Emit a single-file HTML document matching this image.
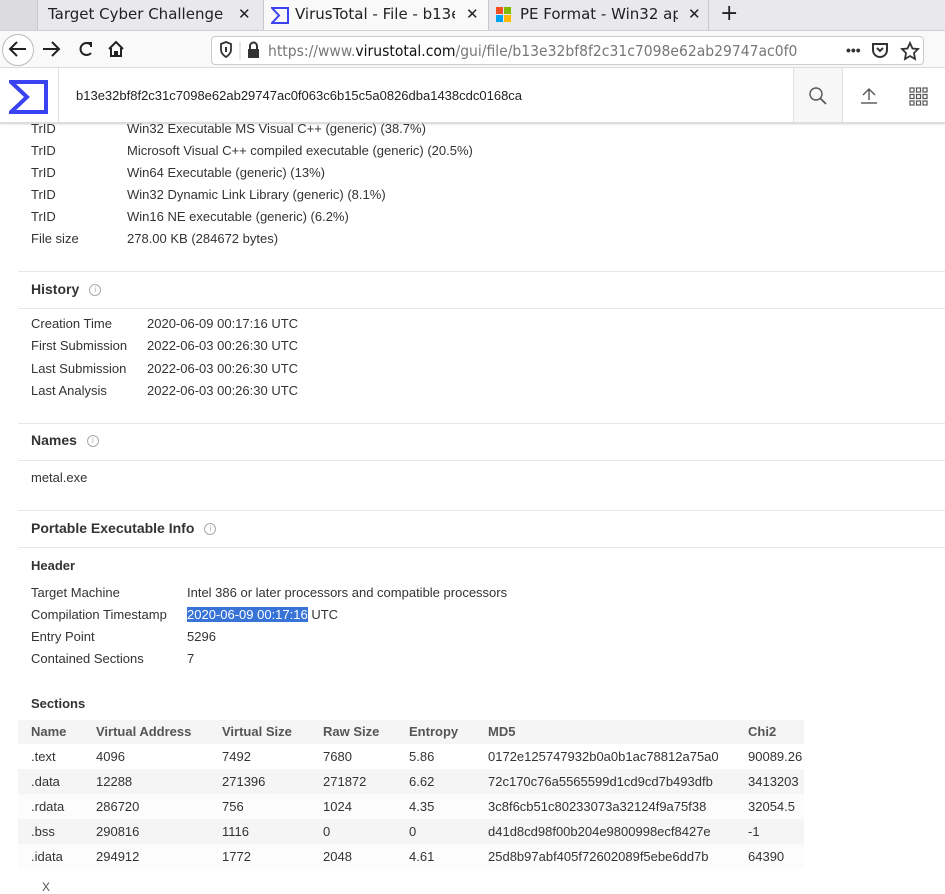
<!DOCTYPE html>
<html><head><meta charset="utf-8"><style>
*{margin:0;padding:0;box-sizing:border-box}
body{width:945px;height:889px;overflow:hidden;background:#fff;font-family:"Liberation Sans",sans-serif;color:#333;font-size:13px;position:relative}
.a{position:absolute;white-space:nowrap}
.tb{font-family:"DejaVu Sans",sans-serif;font-size:15px;color:#222}
.hr{position:absolute;left:18px;right:0;height:1px;background:#e6e6e6}
.h{font-weight:bold;font-size:14px;color:#333}
.ic{display:inline-block;width:12px;height:12px;border:1px solid #aaa;border-radius:50%;font-size:8px;color:#aaa;text-align:center;line-height:10px;font-weight:normal;vertical-align:middle;margin-left:10px}
.th{font-weight:bold;color:#555}
</style></head><body>
<!-- tab bar -->
<div class="a" style="left:0;top:0;width:945px;height:30px;background:#e9e8ec"></div>
<div class="a" style="left:0;top:0;width:37px;height:30px;background:#dcdbe0"></div>
<div class="a" style="left:37px;top:0;width:226px;height:30px;border-left:1px solid #c8c8c8"></div>
<div class="a tb" style="left:48px;top:5px">Target Cyber Challenge</div>
<div class="a tb" style="left:238px;top:5px">✕</div>
<div class="a" style="left:263px;top:0;width:226px;height:31px;background:#f9f9fa;border-left:1px solid #c8c8c8;border-right:1px solid #c8c8c8"></div>
<svg class="a" style="left:271px;top:7px" width="18" height="17"><path d="M1 1H17V16H1L8 8.5Z" fill="none" stroke="#3a43f2" stroke-width="2"/></svg>
<div class="a tb" style="left:295px;top:5px;width:160px;overflow:hidden">VirusTotal - File - b13e32</div>
<div class="a tb" style="left:466px;top:5px">✕</div>
<svg class="a" style="left:496px;top:7px" width="16" height="16"><rect x="0" y="0" width="7" height="7" fill="#f25022"/><rect x="8" y="0" width="7" height="7" fill="#7fba00"/><rect x="0" y="8" width="7" height="7" fill="#00a4ef"/><rect x="8" y="8" width="7" height="7" fill="#ffb900"/></svg>
<div class="a tb" style="left:520px;top:5px;width:158px;overflow:hidden">PE Format - Win32 apps</div>
<div class="a tb" style="left:688px;top:5px">✕</div>
<div class="a" style="left:708px;top:0;height:30px;border-left:1px solid #c8c8c8"></div>
<div class="a tb" style="left:720px;top:1px;font-size:22px">+</div>
<!-- nav bar -->
<div class="a" style="left:0;top:30px;width:945px;height:37px;background:#f9f9fa;border-top:1px solid #d0d0d0"></div>
<div class="a" style="left:2px;top:34px;width:32px;height:32px;border:1px solid #bbb;border-radius:50%;background:#fff"></div>
<svg class="a" style="left:0;top:30px" width="140" height="37"><g fill="none" stroke="#222" stroke-width="2"><path d="M10 19H26M17 12L10 19L17 26"/><path d="M43 19H59M52 12L59 19L52 26"/><path d="M91 15A6 6 0 1 0 91 23M87 13H91V17"/><path d="M109 19L116 12L123 19M111 18V26H121V18"/></g><rect x="114" y="21" width="4" height="5" fill="#222"/></svg>
<div class="a" style="left:211px;top:36px;width:713px;height:29px;background:#fff;border:1px solid #ccc;border-radius:4px"></div>
<svg class="a" style="left:218px;top:41px" width="48" height="20"><path d="M3 3L8 1L13 3V9C13 13 8 16 8 16C8 16 3 13 3 9Z" fill="none" stroke="#333" stroke-width="1.8"/><rect x="7" y="6" width="2" height="5" fill="#333"/><line x1="22" y1="1" x2="22" y2="19" stroke="#ccc"/><rect x="30" y="8" width="11" height="9" fill="#333"/><path d="M32 8V5A3.5 3.5 0 0 1 39 5V8" fill="none" stroke="#333" stroke-width="2"/></svg>
<div class="a" style="left:268px;top:42px;font-family:'DejaVu Sans',sans-serif;font-size:15px;color:#777;width:570px;overflow:hidden;transform:scaleX(.93);transform-origin:left"><span>https://www.</span><span style="color:#111">virustotal.com</span>/gui/file/b13e32bf8f2c31c7098e62ab29747ac0f063c6b15c5a0826</div>
<div class="a" style="left:846px;top:42px;font-size:14px;font-weight:bold;color:#333">•••</div>
<svg class="a" style="left:870px;top:41px" width="50" height="20"><path d="M3 3H17V9A7 7 0 0 1 3 9Z" fill="none" stroke="#333" stroke-width="2"/><path d="M7 7L10 10L13 7" fill="none" stroke="#333" stroke-width="2"/><path d="M40 2L42.5 7.5L48 8L44 12L45 18L40 15L35 18L36 12L32 8L37.5 7.5Z" fill="none" stroke="#333" stroke-width="1.8"/></svg>
<!-- VT header -->
<div class="a" style="left:0;top:67px;width:945px;height:56px;background:#fff;border-top:1px solid #ddd;border-bottom:1px solid #ddd;box-shadow:0 1px 2px rgba(0,0,0,.1)"></div>
<svg class="a" style="left:9px;top:80px" width="40" height="34"><path d="M2 2H37V32H2L18 17Z" fill="none" stroke="#3a43f2" stroke-width="4"/></svg>
<div class="a" style="left:58px;top:68px;height:54px;border-left:1px solid #e0e0e0"></div>
<div class="a" style="left:76px;top:88px;font-size:13px;color:#222">b13e32bf8f2c31c7098e62ab29747ac0f063c6b15c5a0826dba1438cdc0168ca</div>
<div class="a" style="left:793px;top:68px;width:50px;height:54px;background:#f7f7f7;border-left:1px solid #e0e0e0;border-right:1px solid #e0e0e0"></div>
<svg class="a" style="left:808px;top:86px" width="20" height="20"><circle cx="8" cy="8" r="6" fill="none" stroke="#555" stroke-width="1.4"/><path d="M12.5 12.5L18 18" stroke="#555" stroke-width="1.6"/></svg>
<svg class="a" style="left:859px;top:87px" width="20" height="18"><path d="M10 13V2M4 8L10 2L16 8" fill="none" stroke="#555" stroke-width="1.4"/><path d="M2 16H18" stroke="#555" stroke-width="1.4"/></svg>
<svg class="a" style="left:909px;top:87px" width="20" height="20"><g fill="none" stroke="#555" stroke-width="1.2"><rect x="1" y="1" width="4" height="4"/><rect x="7.5" y="1" width="4" height="4"/><rect x="14" y="1" width="4" height="4"/><rect x="1" y="7.5" width="4" height="4"/><rect x="7.5" y="7.5" width="4" height="4"/><rect x="14" y="7.5" width="4" height="4"/><rect x="1" y="14" width="4" height="4"/><rect x="7.5" y="14" width="4" height="4"/><rect x="14" y="14" width="4" height="4"/></g></svg>
<!-- TrID -->
<div class="a" style="left:31px;top:118px;line-height:22px">TrID<br>TrID<br>TrID<br>TrID<br>TrID<br>File size</div>
<div class="a" style="left:127px;top:118px;line-height:22px">Win32 Executable MS Visual C++ (generic) (38.7%)<br>Microsoft Visual C++ compiled executable (generic) (20.5%)<br>Win64 Executable (generic) (13%)<br>Win32 Dynamic Link Library (generic) (8.1%)<br>Win16 NE executable (generic) (6.2%)<br>278.00 KB (284672 bytes)</div>
<div class="a" style="left:0;top:67px;width:945px;height:56px;background:#fff;border-bottom:1px solid #ddd;box-shadow:0 1px 2px rgba(0,0,0,.1);z-index:-1"></div>
<div class="hr" style="top:271px"></div>
<div class="a h" style="left:31px;top:281px">History<span class="ic">i</span></div>
<div class="hr" style="top:308px"></div>
<div class="a" style="left:31px;top:313px;line-height:22.3px">Creation Time<br>First Submission<br>Last Submission<br>Last Analysis</div>
<div class="a" style="left:147px;top:313px;line-height:22.3px">2020-06-09 00:17:16 UTC<br>2022-06-03 00:26:30 UTC<br>2022-06-03 00:26:30 UTC<br>2022-06-03 00:26:30 UTC</div>
<div class="hr" style="top:423px"></div>
<div class="a h" style="left:31px;top:432px">Names<span class="ic">i</span></div>
<div class="hr" style="top:460px"></div>
<div class="a" style="left:31px;top:470px">metal.exe</div>
<div class="hr" style="top:510px"></div>
<div class="a h" style="left:31px;top:520px">Portable Executable Info<span class="ic">i</span></div>
<div class="hr" style="top:547px"></div>
<div class="a" style="left:31px;top:558px;font-weight:bold;font-size:13px">Header</div>
<div class="a" style="left:31px;top:582px;line-height:22px">Target Machine<br>Compilation Timestamp<br>Entry Point<br>Contained Sections</div>
<div class="a" style="left:187px;top:582px;line-height:22px">Intel 386 or later processors and compatible processors<br><span style="background:#3874d8;color:#fff">2020-06-09 00:17:16</span> UTC<br>5296<br>7</div>
<div class="a" style="left:31px;top:696px;font-weight:bold;font-size:13px">Sections</div>
<!-- table -->
<div class="a" style="left:18px;top:720px;width:786px;height:24px;background:#f5f5f5"></div>
<div class="a" style="left:18px;top:769px;width:786px;height:25px;background:#f5f5f5"></div>
<div class="a" style="left:18px;top:819px;width:786px;height:25px;background:#f5f5f5"></div>
<div class="a" style="left:18px;top:794px;width:786px;height:25px;background:#fcfcfc"></div>
<div class="a" style="left:18px;top:844px;width:786px;height:25px;background:#fcfcfc"></div>
<div class="a th" style="left:31px;top:719px;line-height:25px">Name</div>
<div class="a th" style="left:96px;top:719px;line-height:25px">Virtual Address</div>
<div class="a th" style="left:222px;top:719px;line-height:25px">Virtual Size</div>
<div class="a th" style="left:323px;top:719px;line-height:25px">Raw Size</div>
<div class="a th" style="left:409px;top:719px;line-height:25px">Entropy</div>
<div class="a th" style="left:488px;top:719px;line-height:25px">MD5</div>
<div class="a th" style="left:748px;top:719px;line-height:25px">Chi2</div>
<div class="a" style="left:31px;top:744px;line-height:25px">.text<br>.data<br>.rdata<br>.bss<br>.idata</div>
<div class="a" style="left:96px;top:744px;line-height:25px">4096<br>12288<br>286720<br>290816<br>294912</div>
<div class="a" style="left:222px;top:744px;line-height:25px">7492<br>271396<br>756<br>1116<br>1772</div>
<div class="a" style="left:323px;top:744px;line-height:25px">7680<br>271872<br>1024<br>0<br>2048</div>
<div class="a" style="left:409px;top:744px;line-height:25px">5.86<br>6.62<br>4.35<br>0<br>4.61</div>
<div class="a" style="left:488px;top:744px;line-height:25px">0172e125747932b0a0b1ac78812a75a0<br>72c170c76a5565599d1cd9cd7b493dfb<br>3c8f6cb51c80233073a32124f9a75f38<br>d41d8cd98f00b204e9800998ecf8427e<br>25d8b97abf405f72602089f5ebe6dd7b</div>
<div class="a" style="left:748px;top:744px;line-height:25px">90089.26<br>3413203<br>32054.5<br>-1<br>64390</div>
<div class="a" style="left:42px;top:880px;font-size:12px;color:#555">X</div>
</body></html>
